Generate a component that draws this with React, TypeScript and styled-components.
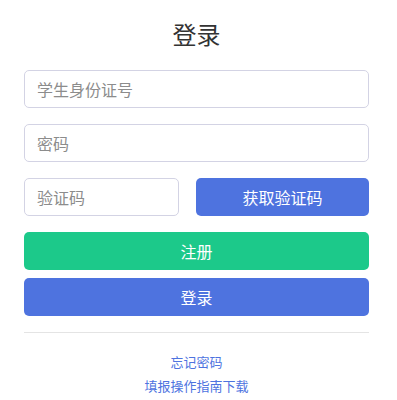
import styled, { createGlobalStyle } from "styled-components";

const GlobalStyle = createGlobalStyle`
  body {
    margin: 0;
    background: #fff;
    font-family: "Noto Sans CJK SC", "Noto Sans", sans-serif;
  }
`;

const App = () => {
  return (
    <>
      <GlobalStyle />
      <Page>
        <Title>登录</Title>
        <Form>
          <Field placeholder="学生身份证号" />
          <Field placeholder="密码" type="password" />
          <CaptchaRow>
            <Field placeholder="验证码" />
            <Button $color="#4e73df">获取验证码</Button>
          </CaptchaRow>
          <ButtonGroup>
            <Button $color="#1cc98a">注册</Button>
            <Button $color="#4e73df">登录</Button>
          </ButtonGroup>
        </Form>
        <Divider />
        <Links>
          <LinkText>忘记密码</LinkText>
          <LinkText>填报操作指南下载</LinkText>
        </Links>
      </Page>
    </>
  );
};

export default App;

const Page = styled.div`
  width: 397px;
  box-sizing: border-box;
  padding: 16px 28px 0 24px;
  display: flex;
  flex-direction: column;
`;

const Title = styled.h1`
  margin: 0 0 18px;
  font-size: 24px;
  line-height: 36px;
  font-weight: 400;
  color: #333;
  text-align: center;
`;

const Form = styled.div`
  display: flex;
  flex-direction: column;
  gap: 16px;
`;

const Field = styled.input`
  width: 100%;
  height: 38px;
  box-sizing: border-box;
  padding: 0 12px;
  border: 1px solid #d3d3e4;
  border-radius: 5px;
  font-family: inherit;
  font-size: 16px;
  color: #333;
  outline: none;

  &::placeholder {
    color: #8c8c8c;
  }
`;

const CaptchaRow = styled.div`
  display: grid;
  grid-template-columns: 155px 1fr;
  gap: 17px;
`;

const ButtonGroup = styled.div`
  display: flex;
  flex-direction: column;
  gap: 8px;
`;

const Button = styled.button<{ $color: string }>`
  height: 38px;
  border: none;
  border-radius: 5px;
  background: ${({ $color }) => $color};
  color: #fff;
  font-family: inherit;
  font-size: 16px;
  cursor: pointer;
`;

const Divider = styled.hr`
  margin: 16px 0 17px;
  border: none;
  border-top: 1px solid #e4e4e4;
`;

const Links = styled.div`
  display: flex;
  flex-direction: column;
  align-items: center;
`;

const LinkText = styled.a`
  font-size: 13px;
  line-height: 24px;
  color: #4e73df;
  cursor: pointer;
`;
